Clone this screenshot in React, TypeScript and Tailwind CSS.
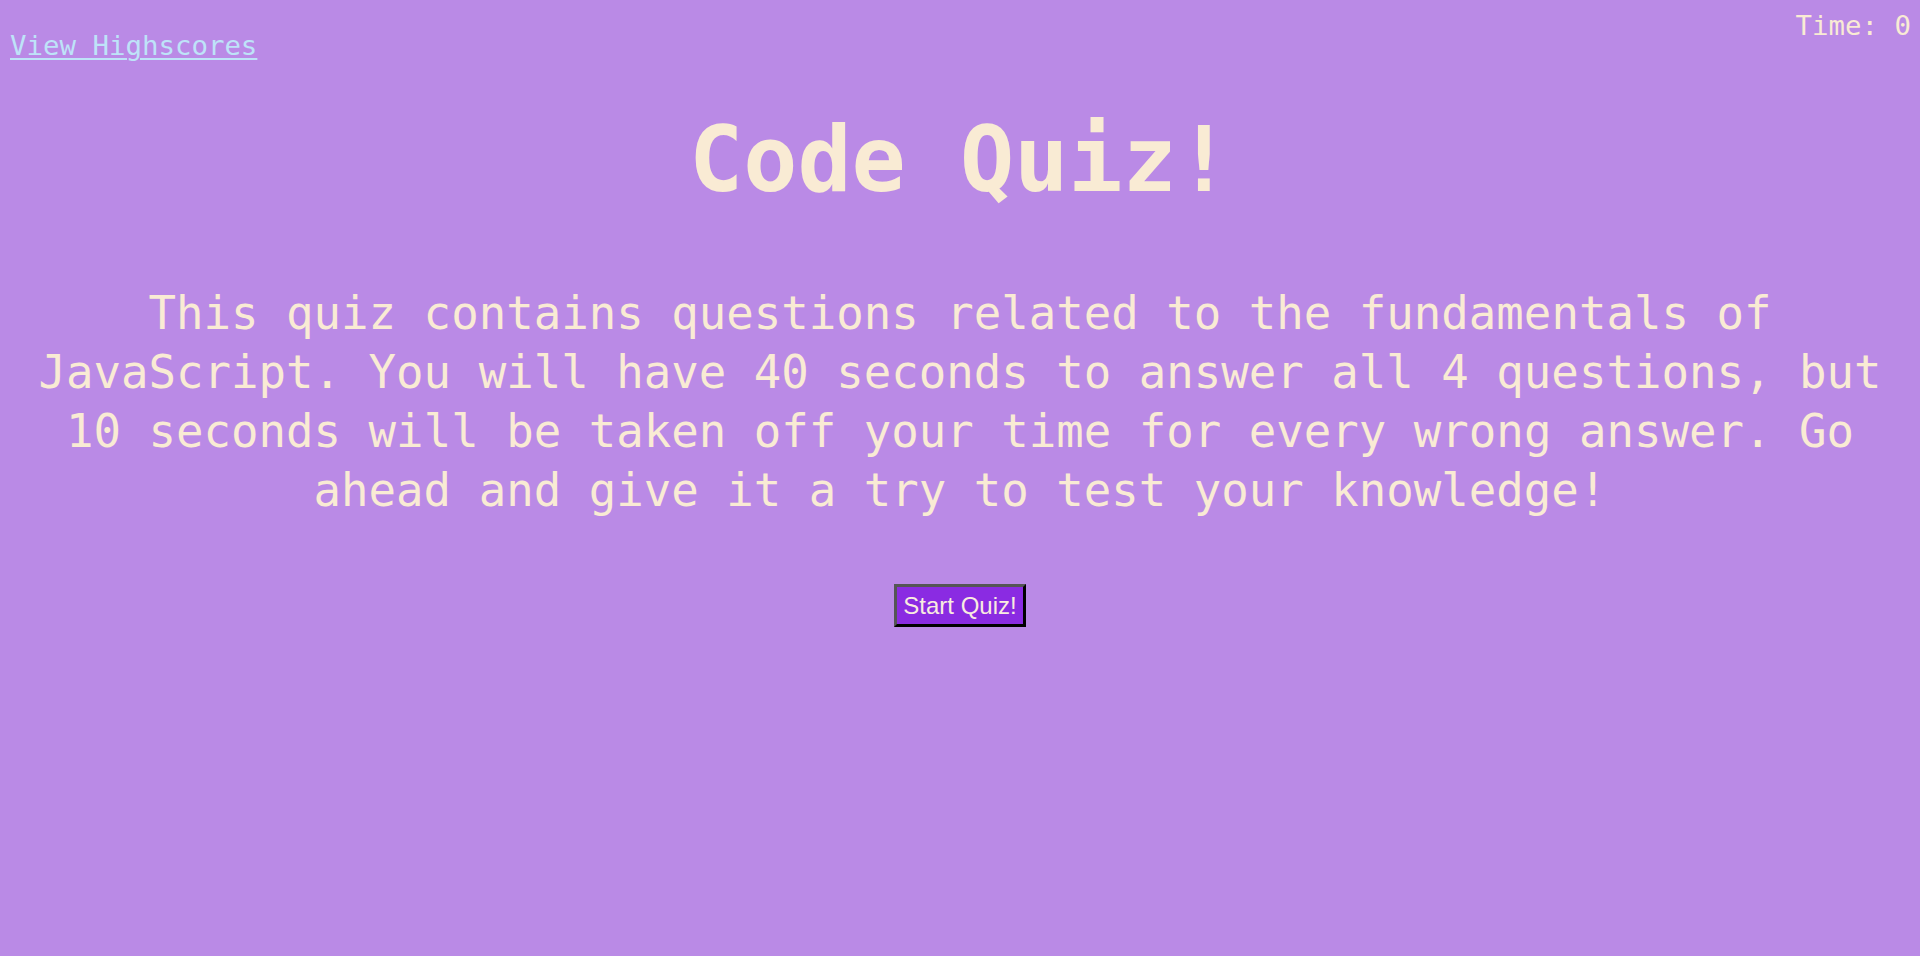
import { useState } from "react"

const intro =
  "This quiz contains questions related to the fundamentals of JavaScript. You will have 40 seconds to answer all 4 questions, but 10 seconds will be taken off your time for every wrong answer. Go ahead and give it a try to test your knowledge!"

export default function App() {
  const [time] = useState(0)

  return (
    <div className="min-h-screen bg-[#ba8ae6] font-['DejaVu_Sans_Mono',monospace] text-[#f9ebd4]">
      {/* Header */}
      <header className="flex items-start justify-between">
        <a
          href="#"
          className="ml-[10px] mt-[30px] text-[27.4px] leading-[32px] text-[#bee3f8] underline decoration-[2px] underline-offset-[3px]"
        >
          View Highscores
        </a>
        <div className="mr-[9px] mt-[10px] text-[27.4px] leading-[32px]">Time: {time}</div>
      </header>

      {/* Intro */}
      <main className="flex flex-col items-center">
        <h1 className="mt-[44px] text-[90px] font-bold leading-[108px]">Code Quiz!</h1>
        <p className="mt-[70px] px-[20px] text-center text-[45.7px] leading-[59px]">{intro}</p>
        <button
          className="mt-[64px] border-[3px] border-t-[#555] border-l-[#555] border-b-black border-r-black bg-[#8a2be2] px-[6px] pt-[5px] pb-[4px] font-['Liberation_Sans',Arial,sans-serif] text-[24px] leading-[28px] text-[#f9ebe0]"
        >
          Start Quiz!
        </button>
      </main>
    </div>
  )
}
